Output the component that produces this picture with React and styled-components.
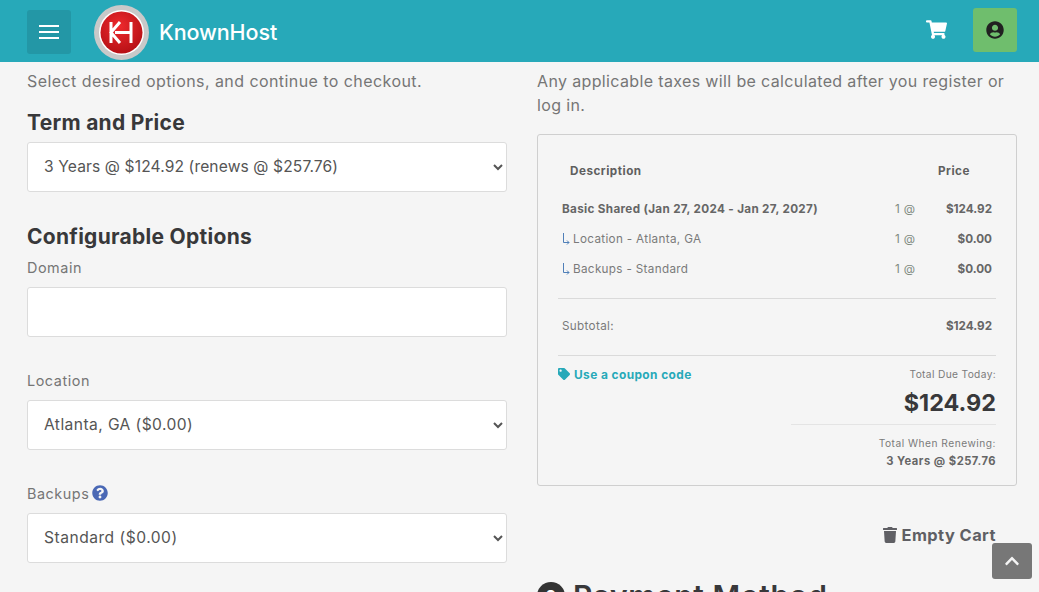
import React from "react";
import styled, { createGlobalStyle } from "styled-components";
import { FaShoppingCart, FaUserCircle, FaTag, FaTrash, FaQuestionCircle, FaChevronUp } from "react-icons/fa";

const Global = createGlobalStyle`
  html, body { margin: 0; padding: 0; height: 100%; overflow: hidden; background: #f5f5f5; }
  body { font-family: Inter, "Liberation Sans", sans-serif; color: #6b6b6b; }
  * { box-sizing: border-box; }
`;
const Page = styled.div`height: 592px; overflow: hidden; position: relative;`;
const Header = styled.header`
  height: 62px; background: #27a9b9; display: flex; align-items: center; padding: 0 22px 0 27px;
`;
const Burger = styled.button`
  width: 44px; height: 44px; margin-top: 2px; background: #2397a6; border: 0; border-radius: 3px; padding: 0;
  display: flex; flex-direction: column; align-items: center; justify-content: center; gap: 4px;
  span { display: block; width: 20px; height: 2px; background: #fff; }
`;
const Logo = styled.svg`width: 56px; height: 56px; margin: 3px 0 0 23px; flex: none;`;
const Brand = styled.span`
  margin: 2px 0 0 9px; font-size: 21.5px; font-weight: 500; color: #fff; letter-spacing: -0.1px;
`;
const HeaderRight = styled.div`margin-left: auto; display: flex; align-items: center; gap: 26px; color: #fff;`;
const CartIcon = styled(FaShoppingCart)`width: 21px; height: 19px; color: #fff; margin-top: -3px;`;
const UserButton = styled.button`
  width: 44px; height: 44px; background: #6fbe6d; border: 0; border-radius: 3px; padding: 0;
  display: flex; align-items: center; justify-content: center; color: #212121; margin-bottom: 2px;
`;
const Columns = styled.main`display: grid; grid-template-columns: 480px 480px; gap: 30px; padding: 0 22px 0 27px;`;
const Column = styled.section`display: flex; flex-direction: column; min-width: 0;`;
const Intro = styled.p`margin: 7px 0 0; font-size: 16px; line-height: 24px; color: #767676; letter-spacing: ${p => p.$ls}px;`;
const Heading = styled.h2`
  margin: ${p => p.$top}px 0 0; font-size: 21px; line-height: 24px; font-weight: 700; color: #38383a; letter-spacing: 0.28px;
`;
const Field = styled.div`margin-top: ${p => p.$top}px;`;
const Label = styled.label`
  display: flex; align-items: center; gap: 3px; font-size: 14.4px; line-height: 20px; color: #767676; margin-bottom: 9px; letter-spacing: 0.55px;
`;
const Help = styled(FaQuestionCircle)`width: 16px; height: 16px; color: #4a68b5; margin-top: -3px;`;
const Select = styled.select`
  display: block; width: 480px; height: 50px; background-color: #fff; border: 1px solid #dcdcdc; border-radius: 3px;
  padding: 0 12px 2px; font: 400 15.6px Inter, "Liberation Sans", sans-serif; color: #555; letter-spacing: ${p => p.$ls}px;
`;
const TextInput = styled.input`
  display: block; width: 480px; height: 50px; background: #fff; border: 1px solid #dcdcdc; border-radius: 3px;
`;
const Summary = styled.div`
  margin-top: 17px; height: 352px; border: 1px solid #cfcfcf; border-radius: 3px; padding: 20px 20px 0;
`;
const Row = styled.div`
  display: grid; grid-template-columns: 1fr 35px 66px; align-items: center; height: ${p => p.$h || 30}px;
  font-size: 11.7px; color: #7a7a7a; padding-left: 4px; letter-spacing: 0.33px;
`;
const Head = styled(Row)`font-weight: 700; color: #5f5f5f; padding: 0 0 0 12px; height: 32px; margin-bottom: 7px; letter-spacing: 0.5px;`;
const PriceHead = styled.span`padding-left: 8px;`;
const Bold = styled.span`font-weight: 700; color: #666;`;
const Arrow = styled.svg`width: 8px; height: 12px; margin-right: 3px; vertical-align: -2px;`;
const Qty = styled.span`color: #7f8a80;`;
const Amount = styled.span`font-weight: 700; color: #666; text-align: right; padding-right: 4px; letter-spacing: 0;`;
const Divider = styled.hr`margin: ${p => p.$top || 0}px 0 0; border: 0; border-top: 1px solid #dadada;`;
const Totals = styled.div`display: flex; justify-content: space-between; margin-top: 9px;`;
const Coupon = styled.a`
  display: inline-flex; align-items: center; gap: 4px; font-size: 11.9px; font-weight: 700; color: #27a9b9; height: 18px; letter-spacing: 0.42px;
`;
const TotalBlock = styled.div`display: flex; flex-direction: column; align-items: flex-end; width: 205px;`;
const Small = styled.div`font-size: 10.2px; line-height: 18px; color: #7a7a7a; letter-spacing: ${p => p.$ls}px;`;
const Total = styled.div`font-size: 23.4px; line-height: 36px; font-weight: 700; color: #38383a; margin-top: 2px;`;
const ThinRule = styled.div`width: 100%; border-top: 1px solid #e4e4e4; margin: 3px 0 9px;`;
const Renew = styled.div`font-size: 11.2px; line-height: 18px; font-weight: 700; color: #666; letter-spacing: 0.5px;`;
const EmptyCart = styled.div`
  display: flex; justify-content: flex-end; align-items: center; gap: 4px; margin-top: 39px; padding-right: 21px;
  font-size: 16.4px; line-height: 20px; font-weight: 700; color: #5f5f64; letter-spacing: 0.45px;
`;
const PayHeading = styled.h2`
  display: flex; align-items: center; gap: 8px; margin: 34px 0 0; font-size: 30px; line-height: 34px; font-weight: 600; color: #38383a; white-space: nowrap; letter-spacing: 0.6px;
`;
const Circle = styled.span`
  width: 28px; height: 28px; border-radius: 50%; background: #333; color: #fff; font-size: 16px; font-weight: 700;
  display: inline-flex; align-items: center; justify-content: center; flex: none;
`;
const ScrollTop = styled.button`
  position: fixed; left: 992px; top: 543px; width: 40px; height: 36px; background: #777; border: 0; border-radius: 3px;
  color: #f4f4f4; display: flex; align-items: center; justify-content: center; padding: 0;
`;

const SubArrow = () => (
  <Arrow viewBox="0 0 8 12">
    <path d="M1.5 0v9.5H7M5 7.5l2 2-2 2" fill="none" stroke="#4f7fb8" strokeWidth="1" />
  </Arrow>
);

export default function App() {
  return (
    <Page>
      <Global />
      <Header>
        <Burger aria-label="Menu"><span /><span /><span /></Burger>
        <Logo viewBox="0 0 56 56">
          <defs>
            <radialGradient id="red" cx="45%" cy="35%" r="70%">
              <stop offset="0" stopColor="#ee2a2e" />
              <stop offset="1" stopColor="#b30f14" />
            </radialGradient>
          </defs>
          <circle cx="27.5" cy="27.5" r="27.5" fill="#c9c9c9" />
          <circle cx="27.5" cy="27.5" r="22.5" fill="#fff" />
          <circle cx="27.5" cy="27.5" r="21" fill="url(#red)" />
          <path d="M17 17v21M26 17 17 27.5 26 38M21 27.5h15M37 17v21" fill="none" stroke="#fff" strokeWidth="3" />
        </Logo>
        <Brand>KnownHost</Brand>
        <HeaderRight>
          <CartIcon />
          <UserButton aria-label="Account"><FaUserCircle size={18} /></UserButton>
        </HeaderRight>
      </Header>
      <Columns>
        <Column>
          <Intro $ls={0.43}>Select desired options, and continue to checkout.</Intro>
          <Heading $top={18}>Term and Price</Heading>
          <Field $top={7}>
            <Select $ls={0.12} defaultValue="a"><option value="a">3 Years @ $124.92 (renews @ $257.76)</option></Select>
          </Field>
          <Heading $top={33}>Configurable Options</Heading>
          <Field $top={9}>
            <Label>Domain</Label>
            <TextInput />
          </Field>
          <Field $top={34}>
            <Label>Location</Label>
            <Select $ls={0.42} defaultValue="a"><option value="a">Atlanta, GA ($0.00)</option></Select>
          </Field>
          <Field $top={34}>
            <Label>Backups <Help /></Label>
            <Select $ls={0.5} defaultValue="a"><option value="a">Standard ($0.00)</option></Select>
          </Field>
        </Column>
        <Column>
          <Intro $ls={0.36}>Any applicable taxes will be calculated after you register or log in.</Intro>
          <Summary>
            <Head><span>Description</span><span /><PriceHead>Price</PriceHead></Head>
            <Row><Bold>Basic Shared (Jan 27, 2024 - Jan 27, 2027)</Bold><Qty>1 @</Qty><Amount>$124.92</Amount></Row>
            <Row><span><SubArrow />Location - Atlanta, GA</span><Qty>1 @</Qty><Amount>$0.00</Amount></Row>
            <Row><span><SubArrow />Backups - Standard</span><Qty>1 @</Qty><Amount>$0.00</Amount></Row>
            <Divider $top={14} />
            <Row $h={54}><span>Subtotal:</span><span /><Amount>$124.92</Amount></Row>
            <Divider $top={2} />
            <Totals>
              <Coupon><FaTag size={12} />Use a coupon code</Coupon>
              <TotalBlock>
                <Small $ls={0.35}>Total Due Today:</Small>
                <Total>$124.92</Total>
                <ThinRule />
                <Small $ls={0.5}>Total When Renewing:</Small>
                <Renew>3 Years @ $257.76</Renew>
              </TotalBlock>
            </Totals>
          </Summary>
          <EmptyCart><FaTrash size={16} />Empty Cart</EmptyCart>
          <PayHeading><Circle>2</Circle>Payment Method</PayHeading>
        </Column>
      </Columns>
      <ScrollTop aria-label="Back to top"><FaChevronUp size={16} /></ScrollTop>
    </Page>
  );
}
